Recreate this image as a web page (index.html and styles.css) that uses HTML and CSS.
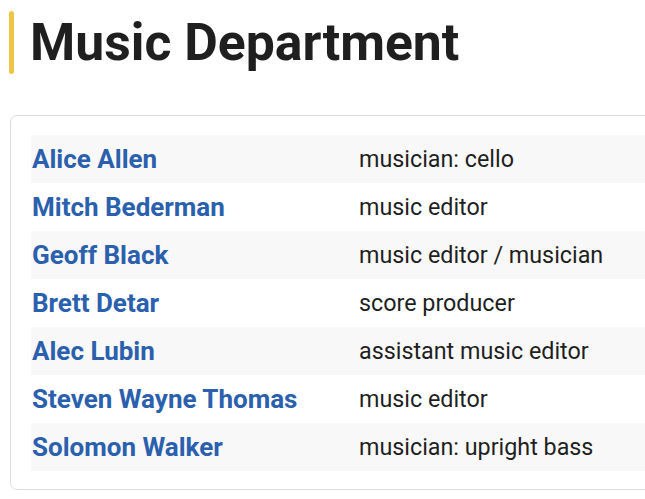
FILE: index.html
```html
<!DOCTYPE html>
<html lang="en">
<head>
<meta charset="utf-8">
<title>Music Department</title>
<link rel="stylesheet" href="styles.css">
</head>
<body>
<section class="dept">
  <h2 class="dept-title">Music Department</h2>
  <div class="card">
    <ul class="credits">
      <li class="credit"><a class="name" href="#">Alice Allen</a><span class="role">musician: cello</span></li>
      <li class="credit"><a class="name" href="#">Mitch Bederman</a><span class="role">music editor</span></li>
      <li class="credit"><a class="name" href="#">Geoff Black</a><span class="role">music editor / musician</span></li>
      <li class="credit"><a class="name" href="#">Brett Detar</a><span class="role">score producer</span></li>
      <li class="credit"><a class="name" href="#">Alec Lubin</a><span class="role">assistant music editor</span></li>
      <li class="credit"><a class="name" href="#">Steven Wayne Thomas</a><span class="role">music editor</span></li>
      <li class="credit"><a class="name" href="#">Solomon Walker</a><span class="role">musician: upright bass</span></li>
    </ul>
  </div>
</section>
</body>
</html>
```

FILE: styles.css
```css
html, body {
  margin: 0;
  padding: 0;
  background: #ffffff;
  overflow: hidden;
}

body {
  font-family: Roboto, "Liberation Sans", Arial, sans-serif;
  color: #1f1f1f;
}

.dept {
  padding: 11px 0 0 9px;
}

.dept-title {
  position: relative;
  margin: 0;
  padding-left: 21px;
  font-size: 51.7px;
  line-height: 63px;
  font-weight: 700;
  color: #1f1f1f;
}

.dept-title::before {
  content: "";
  position: absolute;
  left: 0;
  top: 0;
  width: 5px;
  height: 63px;
  border-radius: 3px;
  background: #efc545;
}

.card {
  margin-top: 41px;
  margin-left: 1px;
  width: 700px;
  border: 1px solid #dddddd;
  border-radius: 7px;
  padding: 19px 0 18px 20px;
}

.credits {
  list-style: none;
  margin: 0;
  padding: 0;
}

.credit {
  display: grid;
  grid-template-columns: 328px 1fr;
  align-items: center;
  height: 48px;
}

.credit:nth-child(odd) {
  background: #f8f8f8;
}

.name {
  padding-left: 1px;
  font-size: 26px;
  line-height: 30px;
  font-weight: 700;
  color: #2a60ad;
  text-decoration: none;
}

.role {
  font-size: 23.3px;
  line-height: 28px;
  font-weight: 400;
  color: #1f1f1f;
}
```
